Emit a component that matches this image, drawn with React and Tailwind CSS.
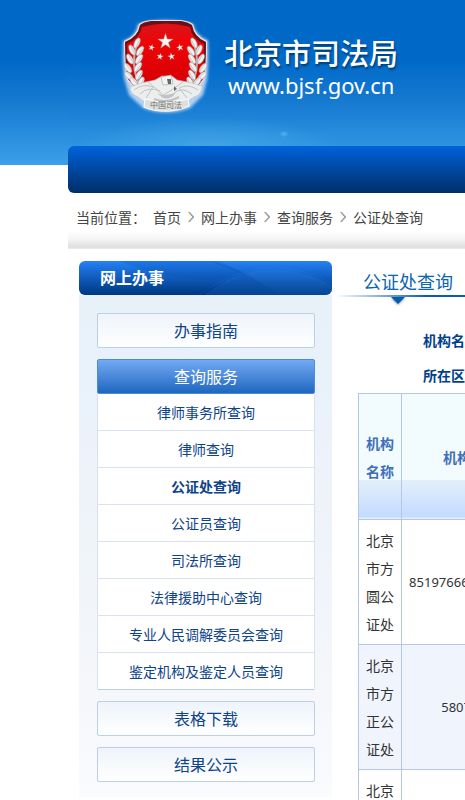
import React from "react";

const subItems = [
  "律师事务所查询",
  "律师查询",
  "公证处查询",
  "公证员查询",
  "司法所查询",
  "法律援助中心查询",
  "专业人民调解委员会查询",
  "鉴定机构及鉴定人员查询",
];

const offices = [
  { name: "北京市方圆公证处", phone: "85197666/85197622" },
  { name: "北京市方正公证处", phone: "58073666" },
  { name: "北京市信德公证处", phone: "" },
];

const STAR = "0,-10 2.3,-3.1 9.5,-3.1 3.7,1.3 5.9,8.1 0,3.9 -5.9,8.1 -3.7,1.3 -9.5,-3.1 -2.3,-3.1";

function Branch() {
  const leaves = [
    [137, 43, 25], [132, 50, -25], [140, 51, 35], [130, 59, -30], [139, 59, 35],
    [128, 68, -35], [138, 67, 35], [129, 76, -45], [139, 75, 30], [134, 82, -40], [141, 82, 25],
  ];
  return (
    <g>
      <path d="M137 44 C133 56 132 70 140 86" stroke="#b9b2b2" strokeWidth="2" fill="none" />
      {leaves.map(([x, y, r], i) => (
        <g key={i} transform={`translate(${x} ${y}) rotate(${r})`}>
          <ellipse rx="2.6" ry="5.5" fill="#f0f0f0" stroke="#aaa4a4" strokeWidth="0.5" />
          <path d="M1 -4 V5" stroke="#c4c0c0" strokeWidth="0.8" />
        </g>
      ))}
    </g>
  );
}

function Emblem() {
  return (
    <svg viewBox="118 14 96 104" className="h-[104px] w-24 shrink-0" role="img" aria-label="中国司法">
      <defs>
        <linearGradient id="red" x1="0" y1="0" x2="0" y2="1">
          <stop offset="0" stopColor="#d8141a" />
          <stop offset="0.3" stopColor="#ee0507" />
          <stop offset="1" stopColor="#d40004" />
        </linearGradient>
        <filter id="glow" x="-20%" y="-20%" width="140%" height="140%">
          <feGaussianBlur stdDeviation="1.6" />
        </filter>
      </defs>
      <g filter="url(#glow)" fill="#d5e9ff" opacity="0.8">
        <path d="M138 24 Q166 16 193 24 Q196 36 208 40 Q209 66 207 80 L203 95 L190 108 Q166 117 143 108 L129 95 L124 78 Q122 60 123 41 Q136 37 138 24 Z" />
      </g>
      <path d="M139 24 Q142 21 151 20 H181 Q189 21 193 24 Q195 36 207 41 Q207 70 204 80 L196 92 H136 L127 80 Q124 66 124 41 Q137 36 139 24 Z" fill="#f0dede" />
      <path d="M140 25 Q143 22 151 21 H181 Q188 22 192 25 Q194 37 206 42 Q206 70 203 79 L195 90 H137 L128 79 Q125 66 125 42 Q138 37 140 25 Z" fill="#6b1015" />
      <path d="M142 27 Q166 20 190 27 Q192 39 204 44 Q204 68 201 77 L194 86 H138 L130 77 Q127 62 127 44 Q140 38 142 27 Z" fill="url(#red)" />
      <g fill="#fff4ef" stroke="#b26b61" strokeWidth="0.6">
        <polygon points={STAR} transform="translate(165.500 41.500) scale(0.82)" />
        <polygon points={STAR} transform="translate(151.500 47.500) rotate(15) scale(0.34)" />
        <polygon points={STAR} transform="translate(180 47.500) rotate(-15) scale(0.37)" />
        <polygon points={STAR} transform="translate(160 56.500) rotate(10) scale(0.36)" />
        <polygon points={STAR} transform="translate(171.500 56.500) rotate(-10) scale(0.39)" />
      </g>
      <Branch />
      <g transform="translate(331 0) scale(-1 1)"><Branch /></g>
      <path d="M130 87 Q142 82 155 80 L162 76 L172 76 L177 80 Q190 82 202 86 Q202 95 194 97 L188 101 Q166 109 143 101 L138 97 Q130 94 130 87 Z" fill="#eceded" stroke="#bcbcbc" strokeWidth="0.6" />
      <g fill="none" stroke="#c0c2c4" strokeWidth="1">
        <path d="M134 90 Q143 83 153 87 L146 98 M140 94 Q148 86 160 91 M148 82 Q158 90 166 98 M198 90 Q188 83 179 88 L187 98 M192 94 Q183 87 175 92 M183 82 Q172 90 162 96" />
        <path d="M154 99 Q166 104 179 97" strokeWidth="2" />
      </g>
      <path d="M161 77 L171 75 L173 84 L163 85 Z" fill="#f4f4f4" stroke="#a0a0a0" strokeWidth="0.6" />
      <path d="M167 79 h4 v5 h-3 Z M174 86 l3 3 -3 2 Z" fill="#666" />
      <path d="M157 93 Q166 98 176 92 Q172 100 163 98 Z" fill="#bfc3c5" />
      <path d="M145 99 Q166 105 188 99 L189 106 Q166 116 144 107 Z" fill="#dedede" stroke="#f9f9f9" strokeWidth="1.2" />
      <text x="150" y="108" fontSize="8" fill="#707070" className="font-['Noto_Sans_CJK_SC',sans-serif]">中国司法</text>
    </svg>
  );
}

function Chevron() {
  return (
    <svg viewBox="0 0 6 12" className="h-3 w-[6px]" fill="none" aria-hidden="true">
      <path d="M0.500 1 L5 6 L0.500 11" stroke="#c08a50" strokeWidth="1.1" />
      <path d="M1.500 1 L6 6 L1.500 11" stroke="#5fa4da" strokeWidth="0.8" />
    </svg>
  );
}

function MenuLink({ children }) {
  return (
    <a href="#" className="flex h-[35px] items-center justify-center rounded-[2px] border border-[#bccfe6] bg-gradient-to-b from-[#eef4fb] to-white pb-[2px] text-base text-[#0e438a]">
      {children}
    </a>
  );
}

export default function App() {
  return (
    <div className="h-screen overflow-hidden bg-white bg-[linear-gradient(#0068c6_0px,#0068c7_60px,#1579d0_100px,#3b9fe9_165px)] bg-[length:100%_165px] bg-no-repeat pl-[68px] font-['Noto_Sans_CJK_SC','Noto_Sans',sans-serif] text-sm text-[#333]">
      <header>
        <div className="flex h-[146px] bg-[radial-gradient(ellipse_at_216px_134px,#58b2ea_0px,transparent_5px),radial-gradient(ellipse_130px_28px_at_140px_146px,#41a3e6_0px,transparent_100%),linear-gradient(#0068c6_0px,#0069c8_60px,#1579d1_100px,#2e94e1_146px)] pt-[14px] pl-[50px]">
          <Emblem />
          <div className="pt-5 pl-[10px] whitespace-nowrap text-white">
            <h1 className="text-[29px] leading-9 font-medium [text-shadow:1px_2px_2px_#003b75]">北京市司法局</h1>
            <p className="pl-1 font-['Noto_Sans',sans-serif] text-[22px] leading-[30px]">www.bjsf.gov.cn</p>
          </div>
        </div>
        <nav className="h-[47px] rounded-l-md bg-gradient-to-b from-[#0063dc] to-[#002f69]" aria-label="主导航" />
      </header>

      <nav aria-label="当前位置" className="flex h-14 bg-[linear-gradient(#fff_38px,#f5f5f5_46px,#dedede_54px,#ececec_56px)] pt-[14px] pl-2 whitespace-nowrap text-[#444]">
        <div className="flex h-5 items-center gap-[7px] leading-5">
          <span>当前位置：</span>
          <a href="#">首页</a>
          <Chevron />
          <a href="#">网上办事</a>
          <Chevron />
          <a href="#">查询服务</a>
          <Chevron />
          <span>公证处查询</span>
        </div>
      </nav>

      <div className="flex pt-3 pl-[11px]">
        <aside className="w-[253px] shrink-0">
          <div className="relative h-[34px] overflow-hidden rounded-md bg-gradient-to-b from-[#2482f8] to-[#003780]">
            <svg viewBox="0 0 253 34" className="absolute inset-0 h-full w-full" aria-hidden="true">
              <path d="M40 0 Q110 28 170 14 L140 0 Z" fill="#0049a4" opacity="0.18" />
              <path d="M125 34 Q185 -12 253 24 V34 Z" fill="#3f9dff" opacity="0.14" />
              <path d="M120 34 Q185 -14 253 22" stroke="#3f9dff" strokeWidth="1" fill="none" opacity="0.15" />
              <path d="M130 0 Q165 8 200 34 H100 Q150 24 165 13 Z" fill="#003a8c" opacity="0.2" />
            </svg>
            <h2 className="relative pl-[21px] text-base leading-8 font-bold text-white">网上办事</h2>
          </div>
          <nav aria-label="网上办事" className="flex flex-col gap-[11px] bg-[linear-gradient(#e8f0f8,#e9f2fb_20%,#eef2fa_32%,#eff4f8_50%,#f4f6fa_75%,#fafbfe)] pt-[18px] pr-[17px] pb-[15px] pl-[18px] whitespace-nowrap">
            <MenuLink>办事指南</MenuLink>
            <div>
              <a href="#" className="flex h-[35px] items-center justify-center rounded-[2px] border border-[#4c8bdc] bg-gradient-to-b from-[#72aaf3] to-[#1c67c0] pb-[2px] text-base text-white">
                查询服务
              </a>
              <ul className="rounded-b-[2px] border-x border-[#d9e3f0] bg-white text-[#0e438a]">
                {subItems.map((item) => (
                  <li key={item} className="border-b border-[#d9e3f0] last:border-[#bccfe6]">
                    <a
                      href="#"
                      aria-current={item === "公证处查询" ? "page" : undefined}
                      className="flex h-9 items-center justify-center pb-px aria-[current=page]:font-bold"
                    >
                      {item}
                    </a>
                  </li>
                ))}
              </ul>
            </div>
            <MenuLink>表格下载</MenuLink>
            <MenuLink>结果公示</MenuLink>
          </nav>
        </aside>

        <main className="min-w-0 flex-1 whitespace-nowrap">
          <div className="pl-1">
            <h2 className="h-[34px] pt-1 pl-[27px] text-lg leading-8 text-[#0b65b0]">公证处查询</h2>
            <div className="h-[2px] bg-[linear-gradient(90deg,#fff,#0a5dae_90px)]" />
            <svg viewBox="0 0 20 10" className="ml-[52px] h-[10px] w-5 drop-shadow-[0_1px_1px_#999]" aria-hidden="true">
              <path d="M3 0 H17 L10 7 Z" fill="#075cae" />
            </svg>
          </div>
          <form className="pt-[15px] pb-px pl-[91px] font-bold text-[#003f8e]">
            <div className="flex h-[35px] items-center gap-2">
              <label htmlFor="name">机构名称：</label>
              <input id="name" className="h-6 w-40 border border-[#b4c8e4]" />
            </div>
            <div className="flex h-[35px] items-center gap-2">
              <label htmlFor="area">所在区县：</label>
              <select id="area" className="h-6 w-40 border border-[#b4c8e4]" />
            </div>
          </form>
          <table className="ml-[26px] w-[183px] table-fixed border-collapse text-center leading-7">
            <thead>
              <tr className="h-[126px] bg-[linear-gradient(#f2fcff_86px,#e4effb_86px,#c3dbff_123px,#e7effa_124px)] text-[#406fb9]">
                <th scope="col" className="w-[43px] border border-[#b4c8e4] px-[7px] whitespace-normal">机构名称</th>
                <th scope="col" className="border border-[#b4c8e4]">机构电话</th>
              </tr>
            </thead>
            <tbody>
              {offices.map((office) => (
                <tr key={office.name} className="h-[125px] even:bg-[#f0f5fd]">
                  <td className="border border-[#b4c8e4] px-[7px] py-[6px] whitespace-normal">{office.name}</td>
                  <td className="border border-[#b4c8e4] font-['Noto_Sans',sans-serif] text-[13px]">{office.phone}</td>
                </tr>
              ))}
            </tbody>
          </table>
        </main>
      </div>
    </div>
  );
}
